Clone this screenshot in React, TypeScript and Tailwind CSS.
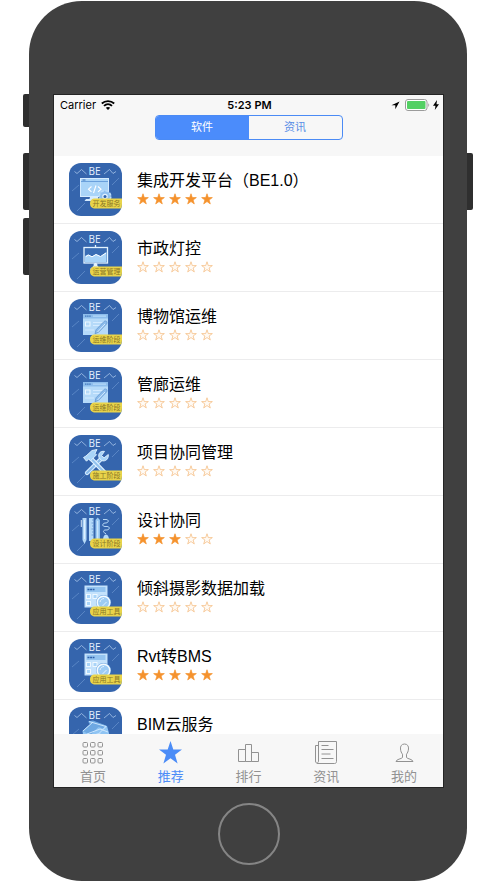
import { useState, type ReactNode } from 'react';

type IconKind = 'code' | 'board' | 'window' | 'tools' | 'pens' | 'calc' | 'cloud';

interface AppItem {
  name: string;
  stars: number;
  kind: IconKind;
  tag?: string;
}

const items: AppItem[] = [
  { name: '集成开发平台（BE1.0）', stars: 5, kind: 'code', tag: '开发服务' },
  { name: '市政灯控', stars: 0, kind: 'board', tag: '运营管理' },
  { name: '博物馆运维', stars: 0, kind: 'window', tag: '运维阶段' },
  { name: '管廊运维', stars: 0, kind: 'window', tag: '运维阶段' },
  { name: '项目协同管理', stars: 0, kind: 'tools', tag: '施工阶段' },
  { name: '设计协同', stars: 3, kind: 'pens', tag: '设计阶段' },
  { name: '倾斜摄影数据加载', stars: 0, kind: 'calc', tag: '应用工具' },
  { name: 'Rvt转BMS', stars: 5, kind: 'calc', tag: '应用工具' },
  { name: 'BIM云服务', stars: 0, kind: 'cloud' },
];

const art: Record<IconKind, ReactNode> = {
  code: (
    <>
      <rect x="11.5" y="15.5" width="28" height="18" fill="#a9d4f8" stroke="#d6ecff" />
      <path d="M12 18.5h27" stroke="#5b93d4" strokeWidth="0.8" />
      <path d="M13.5 17h3" stroke="#3f73b8" strokeWidth="1" />
      <path d="M22.5 23.5l-3 2.7 3 2.7M29 23.5l3 2.7-3 2.7M27 22.5l-2.5 7.5" stroke="#fff" strokeWidth="1.1" fill="none" />
      <path d="M21 34h8l1 4H15.500l1.500-2h3.500z" fill="#d6ecff" />
      <circle cx="36" cy="33.500" r="5.800" fill="#8fc0f0" stroke="#b9dcfa" strokeWidth="1.600" strokeDasharray="3 1.500" />
      <circle cx="36" cy="33.500" r="2.200" fill="#2f62ac" stroke="#e3f3ff" strokeWidth="1.200" />
    </>
  ),
  board: (
    <>
      <path d="M26.500 14v2M26.500 32v2M26 34.500l-4.500 4M27 34.500l4.500 4" stroke="#e3f3ff" strokeWidth="1.300" />
      <rect x="15" y="16.500" width="23.500" height="15.500" fill="#3a6db5" stroke="#e3f3ff" strokeWidth="1.300" />
      <path d="M16 25l3-1.500 4 2 4-2.500 4.500 2.500L37.500 21v10.300H16z" fill="#a9d4f8" />
      <path d="M17 25.500l2.500-1.500 3.500 1.800 4-2.300 4.500 2L37 22" stroke="#fff" strokeWidth="1" fill="none" />
      <circle cx="26.500" cy="34" r="2" fill="#e3f3ff" />
    </>
  ),
  window: (
    <>
      <rect x="14" y="15" width="25" height="21" fill="#b5daf9" />
      <rect x="14" y="15" width="25" height="4.500" fill="#8dbdec" />
      <path d="M16 17.200h6" stroke="#4478bb" strokeWidth="1.200" strokeDasharray="1.500 .6" />
      <path d="M24 17.200h13" stroke="#b5daf9" strokeWidth="1.200" />
      <rect x="16.500" y="23" width="4.500" height="4" fill="none" stroke="#eef8ff" />
      <path d="M24 23.500h11M24 26.500h9M16 31h9" stroke="#d8edff" strokeWidth="0.900" />
      <path d="M26 34.800l1-4 8-8.300c2-1.500 4 .5 2.500 2.500l-8 8.300z" fill="#8dbdec" stroke="#5c91cd" strokeWidth="0.700" />
      <path d="M28.500 33l7.500-8" stroke="#d8edff" strokeWidth="1" />
    </>
  ),
  tools: (
    <>
      <path d="M18 38l14.500-14.500" stroke="#d6ecff" strokeWidth="4.400" strokeLinecap="round" />
      <path d="M18 38l14.500-14.500" stroke="#88baea" strokeWidth="2.200" strokeLinecap="round" />
      <path d="M39.300 19.500l-4.200 3.300-2.600-2.200 3-4.200c-4-.7-6.700 2-5.500 6.200l2.500 3c4 1.300 7.300-1.500 6.800-6.100z" fill="#a9d4f8" stroke="#e3f3ff" strokeWidth="0.900" />
      <path d="M21.500 23l15.500 16" stroke="#e3f3ff" strokeWidth="4.400" />
      <path d="M22 23.500l15 15.500" stroke="#93c3ef" strokeWidth="2.200" />
      <path d="M14.500 22.500l2.500-1.500 6-5.500 5-1-2 3.800 1.500 1.500-6 6-1.800-1.800-2.200 2.200z" fill="#a9d4f8" stroke="#e3f3ff" strokeWidth="0.900" />
    </>
  ),
  pens: (
    <>
      <path d="M13.500 15h4v22l-2 4-2-4z" fill="#b5daf9" />
      <path d="M12.300 17v7M15.500 17v19" stroke="#e3f3ff" strokeWidth="0.900" />
      <rect x="20" y="15" width="4.500" height="23" fill="#b5daf9" />
      <path d="M23 17h1.500M22.500 20h2M23 23h1.500M22.500 26h2M23 29h1.500M22.500 32h2" stroke="#5188cb" strokeWidth="0.700" />
      <path d="M26.500 17l2.200-2.500 2.200 2.500v19h-4.400z" fill="#9dccf5" />
      <path d="M28.700 18v18" stroke="#e3f3ff" strokeWidth="0.800" />
      <path d="M34 16.500h3c3 0 3 3 0 3.500h-1c-3 .5-3 3.500 0 3.500h2c3 0 3 3 0 3.500h-2c-2 .5-2 2.500 0 3l1 1" stroke="#c4e2fc" strokeWidth="0.900" fill="none" />
      <path d="M34 37c0-3 1-5.500 3-5.500s3 2.500 3 5.500z" fill="#b5daf9" />
    </>
  ),
  calc: (
    <>
      <rect x="15.500" y="14.500" width="23" height="22" fill="#c4e2fc" />
      <rect x="17.500" y="16" width="19" height="5" fill="#94c4f0" />
      <path d="M18.500 18.500h7" stroke="#2f62ac" strokeWidth="1.700" strokeDasharray="2 .6" />
      <g fill="#a9d4f8" stroke="#f4fbff" strokeWidth="0.900">
        <rect x="17.500" y="23.500" width="4" height="4" />
        <rect x="24" y="23.500" width="4" height="4" />
        <rect x="17.500" y="30.500" width="4" height="4" />
      </g>
      <path d="M38 37l3 3" stroke="#e3f3ff" strokeWidth="2.500" />
      <circle cx="34.500" cy="31.500" r="7.500" fill="#6fa5e0" />
      <circle cx="34.500" cy="31.500" r="6.300" fill="#9dccf5" stroke="#f4fbff" strokeWidth="1.500" />
      <path d="M31 31c.5-2 2-3.500 4-3.500M33.500 35l4-4" stroke="#e3f3ff" strokeWidth="1" fill="none" />
    </>
  ),
  cloud: (
    <>
      <path d="M13.500 24l11-9.500L38 19l2 7v8H15z" fill="#8fc4f3" />
      <path d="M19 14.500l5-1 13 5-3 3-13-4zM13.500 24l8-7 8 3-8 8z" fill="#6ea8e2" />
      <path d="M20 14.500l17 5-8 8M14 24l10-9M18 27l13-5 8 3" stroke="#d6ecff" strokeWidth="0.900" fill="none" />
      <path d="M20 34c-1-4 3-6 5-5 2-4 8-3 9 0 3-1 6 2 5 5z" fill="#c4e2fc" />
    </>
  ),
};

function AppIcon({ kind, tag }: { kind: IconKind; tag?: string }) {
  return (
    <svg viewBox="0 0 53 53" className="size-[53px] shrink-0 overflow-hidden rounded-xl bg-[#3565ad]" aria-hidden="true">
      <g stroke="#7fa8dc" strokeWidth="0.700" fill="none">
        <path d="M3 28l7-6M43 22l7-7M8 48l8-8" opacity="0.700" />
        <path d="M5.500 8.500L8 10.500 12.500 6.500 17.500 11M35 11l5.500-4.500L44 10.500l3-2" stroke="#b7d2f2" />
      </g>
      <text x="25.500" y="12" textAnchor="middle" fill="#e8f2ff" className="font-['Open_Sans',sans-serif] text-[10px]">
        BE
      </text>
      {art[kind]}
      {tag && (
        <>
          <path d="M25 35.500h28v10H25a5 5 0 0 1-4-5 5 5 0 0 1 4-5z" fill="#e9d44b" />
          <text x="37.500" y="43" textAnchor="middle" fill="#8a7726" className="font-['Noto_Sans_CJK_SC',sans-serif] text-[7px]">
            {tag}
          </text>
        </>
      )}
    </svg>
  );
}

const STAR = 'M12 1.500l2.600 7.700h8.100l-6.500 4.800 2.400 7.800L12 17.100l-6.600 4.700 2.400-7.800-6.500-4.800h8.100z';

function Rating({ value }: { value: number }) {
  return (
    <div className="flex gap-1" role="img" aria-label={`${value} / 5`}>
      {[1, 2, 3, 4, 5].map((n) => (
        <svg key={n} viewBox="0 0 24 24" className="size-3">
          <path d={STAR} fill={n <= value ? '#f5922d' : '#fffaf4'} stroke={n <= value ? '#f5922d' : '#f3b878'} strokeWidth="1.400" />
        </svg>
      ))}
    </div>
  );
}

const tabs: { label: string; icon: ReactNode }[] = [
  {
    label: '首页',
    icon: (
      <>
        {[2.5, 10.5, 18.5].map((y) =>
          [3, 10.5, 18].map((x) => <rect key={`${x}-${y}`} x={x} y={y} width="4.500" height="4.500" rx="1" />),
        )}
      </>
    ),
  },
  {
    label: '推荐',
    icon: <path d="M12.500 1l2.800 8.500H24l-7 5.300 2.600 8.700-7.100-5.200-7.100 5.200L8 14.800 1 9.500h8.700z" fill="currentColor" stroke="none" />,
  },
  { label: '排行', icon: <path d="M2.500 21.500v-12h7v12zM9.500 21.500v-17h6v17zM15.500 21.500v-9h7v9z" /> },
  {
    label: '资讯',
    icon: (
      <path d="M4.500 1.500h18v20c0 1-.5 2-2 2H4c-1.500 0-2.500-1-2.500-2.500V5.500h3M4.500 1.500V21c0 1-.5 2-1.500 2M7.500 5.500h7M7.500 9.500h12M7.500 14h9M7.500 18.500h12" />
    ),
  },
  {
    label: '我的',
    icon: (
      <path d="M12.500 4c-3 0-4.300 2.300-4 5 .2 2.300 1 4 2 5.200v3.300c-1 1.500-6 1.500-6.500 4h17c-.5-2.500-5.500-2.500-6.500-4v-3.300c1-1.200 1.800-2.900 2-5.200.3-2.700-1-5-4-5z" />
    ),
  },
];

function StatusBar() {
  return (
    <div className="grid h-5 grid-cols-3 items-center pr-1 pl-[6px] font-['Inter','Liberation_Sans',sans-serif] text-[11px] leading-5 text-black">
      <div className="flex items-center gap-[5px]">
        <span>Carrier</span>
        <svg viewBox="0 0 14 10" className="h-[10px] w-[14px]" fill="none" stroke="currentColor" strokeWidth="1.800" aria-hidden="true">
          <path d="M.8 3.500C4.300.2 9.700.2 13.200 3.500M3 5.900c2.300-2.200 5.700-2.200 8 0" />
          <path d="M4.800 7.800c1.200-1.200 3.200-1.200 4.400 0L7 10z" fill="currentColor" stroke="none" />
        </svg>
      </div>
      <span className="text-center font-semibold">5:23 PM</span>
      <div className="flex items-center justify-end gap-[5px]">
        <svg viewBox="0 0 10 10" className="size-[9px]" aria-hidden="true">
          <path d="M9.500.5L.5 4.800h4.300v4.500z" fill="#000" />
        </svg>
        <div className="flex items-center gap-[3px]">
          <svg viewBox="0 0 25 12" className="h-3 w-[25px]" aria-hidden="true">
            <rect x="0.500" y="0.500" width="21.500" height="11" rx="2.500" fill="#fff" stroke="#9b9b9b" />
            <rect x="2" y="2" width="18.500" height="8" rx="1" fill="#53d064" />
            <path d="M23.300 4.200c1.200.4 1.200 3.200 0 3.600z" fill="#9b9b9b" />
          </svg>
          <svg viewBox="0 0 6 10" className="h-[10px] w-[6px]" aria-hidden="true">
            <path d="M4 0L0 5.700h2.500L1.800 10 6 4.200H3.500z" fill="#000" />
          </svg>
        </div>
      </div>
    </div>
  );
}

const sideKey = 'w-full rounded-l-[2px] bg-[#2f2f2f]';

export default function App() {
  const [segment, setSegment] = useState('软件');
  const [tab, setTab] = useState('推荐');

  return (
    <div className="bg-white">
      <div className="flex pt-px pr-6 pl-[23px] font-['Liberation_Sans','Noto_Sans_CJK_SC',sans-serif]">
        <div className="flex w-[6px] shrink-0 flex-col pt-[93px]">
          <div className={`h-[33px] ${sideKey}`} />
          <div className={`mt-[26px] h-[57px] ${sideKey}`} />
          <div className={`mt-2 h-[57px] ${sideKey}`} />
        </div>

        <div className="flex min-w-0 flex-1 flex-col items-center rounded-[53px] bg-[#404040] pt-[93px] pr-[23px] pb-4 pl-6">
          <main className="w-full border border-[#242424] bg-white">
            <header className="bg-[#f7f7f7] pb-4">
              <StatusBar />
              <div className="mx-auto flex h-[25px] w-[188px] overflow-hidden rounded-[4px] border border-[#4b8bf5]">
                {['软件', '资讯'].map((name) => (
                  <button
                    key={name}
                    type="button"
                    aria-pressed={segment === name}
                    onClick={() => setSegment(name)}
                    className={`flex-1 text-[11px] leading-[23px] ${segment === name ? 'bg-[#4b8cfb] text-white' : 'text-[#5a8fe6]'}`}
                  >
                    {name}
                  </button>
                ))}
              </div>
            </header>

            <ul className="max-h-[578px] overflow-hidden">
              {items.map((item) => (
                <li key={item.name} className="flex h-[68px] items-center gap-[15px] border-b border-[#ececed] pl-[15px]">
                  <AppIcon kind={item.kind} tag={item.tag} />
                  <div className="flex min-w-0 flex-col pb-[5px]">
                    <h2 className="truncate text-base leading-6 text-black">{item.name}</h2>
                    <Rating value={item.stars} />
                  </div>
                </li>
              ))}
            </ul>

            <nav className="flex h-[53px] bg-[#f7f7f7]">
              {tabs.map(({ label, icon }) => (
                <button
                  key={label}
                  type="button"
                  aria-current={tab === label ? 'page' : undefined}
                  onClick={() => setTab(label)}
                  className={`flex flex-1 flex-col items-center gap-1 pt-[6px] ${tab === label ? 'text-[#4b8cf7]' : 'text-[#929292]'}`}
                >
                  <svg viewBox="0 0 25 25" className="size-[25px]" fill="none" stroke="currentColor" strokeWidth="1" aria-hidden="true">
                    {icon}
                  </svg>
                  <span className="text-[13px] leading-4">{label}</span>
                </button>
              ))}
            </nav>
          </main>

          <button type="button" aria-label="Home" className="mt-[15px] size-[62px] rounded-full border-2 border-[#858585]" />
        </div>

        <div className="w-[6px] shrink-0 pt-[152px]">
          <div className="h-[57px] w-full rounded-r-[2px] bg-[#2f2f2f]" />
        </div>
      </div>
    </div>
  );
}
